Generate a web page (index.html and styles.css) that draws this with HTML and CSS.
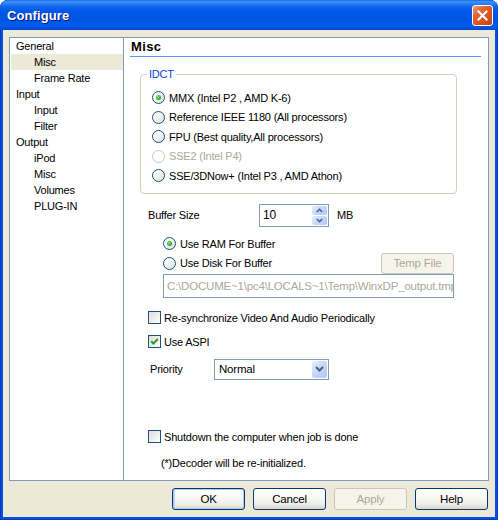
FILE: index.html
```html
<!DOCTYPE html>
<html>
<head>
<meta charset="utf-8">
<link rel="stylesheet" href="styles.css">
</head>
<body>
<div class="window">
  <div class="titlebar">
    <span class="title">Configure</span>
    <span class="close"><svg width="11" height="11" viewBox="0 0 11 11"><path d="M1.5 1.5L9.5 9.5M9.5 1.5L1.5 9.5" stroke="#fff" stroke-width="2.2" stroke-linecap="square"/></svg></span>
  </div>
  <div class="client">
    <div class="panel">
      <ul class="tree">
        <li>General</li>
        <li class="sub sel">Misc</li>
        <li class="sub">Frame Rate</li>
        <li>Input</li>
        <li class="sub">Input</li>
        <li class="sub">Filter</li>
        <li>Output</li>
        <li class="sub">iPod</li>
        <li class="sub">Misc</li>
        <li class="sub">Volumes</li>
        <li class="sub">PLUG-IN</li>
      </ul>
      <div class="content">
        <div class="header">Misc</div>
        <fieldset class="group">
          <legend>IDCT</legend>
          <div class="opts">
            <div class="opt"><span class="radio on"><i></i></span>MMX (Intel P2 , AMD K-6)</div>
            <div class="opt"><span class="radio"></span>Reference IEEE 1180 (All processors)</div>
            <div class="opt"><span class="radio"></span>FPU (Best quality,All processors)</div>
            <div class="opt disabled"><span class="radio"></span>SSE2 (Intel P4)</div>
            <div class="opt"><span class="radio"></span>SSE/3DNow+ (Intel P3 , AMD Athon)</div>
          </div>
        </fieldset>
        <div class="buffer">
          <span class="lbl">Buffer Size</span>
          <div class="spin">
            <span class="val">10</span>
            <div class="spinbtns">
              <span class="sb"><svg width="7" height="5" viewBox="0 0 7 5"><path d="M0.8 4L3.5 1.3L6.2 4" fill="none" stroke="#4D6185" stroke-width="1.6"/></svg></span>
              <span class="sb"><svg width="7" height="5" viewBox="0 0 7 5"><path d="M0.8 1L3.5 3.7L6.2 1" fill="none" stroke="#4D6185" stroke-width="1.6"/></svg></span>
            </div>
          </div>
          <span class="unit">MB</span>
        </div>
        <div class="bufopts">
          <div class="ram"><span class="radio on"><i></i></span>Use RAM For Buffer</div>
          <div class="disk"><span class="radio"></span>Use Disk For Buffer<span class="btn dis temp">Temp File</span></div>
          <div class="path">C:\DOCUME~1\pc4\LOCALS~1\Temp\WinxDP_output.tmp</div>
        </div>
        <div class="chk first"><span class="check"></span>Re-synchronize Video And Audio Periodically</div>
        <div class="chk second"><span class="check"><svg width="11" height="11" viewBox="0 0 11 11"><path d="M2.2 5.2L4.4 7.6L8.8 3" fill="none" stroke="#21A121" stroke-width="2"/></svg></span>Use ASPI</div>
        <div class="priority">
          <span class="plbl">Priority</span>
          <div class="combo">
            <span class="cval">Normal</span>
            <span class="cbtn"><svg width="9" height="6" viewBox="0 0 9 6"><path d="M1 1L4.5 4.5L8 1" fill="none" stroke="#4D6185" stroke-width="2"/></svg></span>
          </div>
        </div>
        <div class="chk shutdown"><span class="check"></span>Shutdown the computer when job is done</div>
        <div class="note">(*)Decoder will be re-initialized.</div>
      </div>
    </div>
    <div class="buttons">
      <span class="btn def">OK</span>
      <span class="btn">Cancel</span>
      <span class="btn dis">Apply</span>
      <span class="btn">Help</span>
    </div>
  </div>
</div>
</body>
</html>
```

FILE: styles.css
```css
body {
  margin: 0;
  font-family: "Liberation Sans", Arial, sans-serif;
  font-size: 11px;
  letter-spacing: -0.2px;
  color: #000;
}

.window {
  width: 498px;
  height: 520px;
  background: #0552E2;
  border-radius: 8px 8px 0 0;
  display: flex;
  flex-direction: column;
  box-shadow: inset 0 0 0 1px #0638C0;
}

.titlebar {
  height: 30px;
  flex: none;
  display: flex;
  align-items: center;
  justify-content: space-between;
  padding: 0 5px 0 7px;
  border-radius: 8px 8px 0 0;
  background: linear-gradient(to bottom,
    #0A52D8 0px, #3D8FF8 1px, #3488F6 3px, #1468EE 6px,
    #0058E8 11px, #0054E4 20px, #015CEC 25px, #0153E0 28px, #0244CC 30px);
}

.title {
  color: #fff;
  font-weight: bold;
  font-size: 13px;
  letter-spacing: 0.1px;
  text-shadow: 1px 1px 0 #0A1874;
  padding-top: 1px;
}

.close {
  width: 21px;
  height: 21px;
  box-sizing: border-box;
  border: 1px solid #fff;
  border-radius: 3px;
  background: linear-gradient(135deg, #F29A7E 0%, #E4602F 35%, #D8501F 70%, #C03E14 100%);
  display: flex;
  align-items: center;
  justify-content: center;
}

.client {
  flex: 1;
  margin: 0 3px 3px;
  background: #ECE9D8;
  padding: 7px 0 0 6px;
  display: flex;
  flex-direction: column;
}

.panel {
  width: 480px;
  height: 444px;
  box-sizing: border-box;
  border: 1px solid #7F9DB9;
  display: flex;
  background: #fff;
}

.tree {
  width: 113px;
  flex: none;
  border-right: 1px solid #7F9DB9;
  margin: 0;
  padding: 0;
  list-style: none;
}

.tree li {
  height: 16px;
  line-height: 16px;
  padding-left: 6px;
  white-space: nowrap;
}

.tree li.sub {
  padding-left: 24px;
}

.tree li.sel {
  background: #ECE9D8;
  margin-left: 1px;
  padding-left: 23px;
}

.content {
  flex: 1;
  padding: 0 7px 0 6px;
  display: flex;
  flex-direction: column;
}

.header {
  height: 18px;
  line-height: 18px;
  border-bottom: 1px solid #5A9BEA;
  font-weight: bold;
  font-size: 13px;
  letter-spacing: 0.4px;
  padding-left: 1px;
}

.group {
  margin: 11px 0 0 10px;
  width: 317px;
  box-sizing: border-box;
  border: 1px solid #D0D0BF;
  border-radius: 4px;
  padding: 7px 0 7px 0;
  min-width: 0;
}

.group legend {
  padding: 0 2px;
  margin-left: 6px;
  color: #0046D5;
  line-height: 13px;
}

.opts {
  padding-left: 11px;
}

.opt {
  height: 19.5px;
  display: flex;
  align-items: center;
  white-space: nowrap;
}

.opt.disabled {
  color: #ACA899;
}

.radio {
  width: 13px;
  height: 13px;
  box-sizing: border-box;
  border: 1px solid #1C5180;
  border-radius: 50%;
  background: linear-gradient(135deg, #FFFFFF 20%, #DCDCD4 100%);
  margin-right: 4px;
  flex: none;
  display: flex;
  align-items: center;
  justify-content: center;
}

.opt.disabled .radio {
  border-color: #CAC8BB;
  background: #fff;
}

.radio i {
  width: 5px;
  height: 5px;
  border-radius: 50%;
  background: radial-gradient(circle at 40% 40%, #8BE584 0%, #2CB02A 60%, #1E8E1E 100%);
}

.buffer {
  margin: 10px 0 0 18px;
  height: 23px;
  display: flex;
  align-items: center;
}

.lbl {
  width: 111px;
}

.spin {
  width: 70px;
  height: 23px;
  box-sizing: border-box;
  border: 1px solid #7F9DB9;
  padding: 1px;
  display: flex;
  align-items: center;
  background: #fff;
}

.spin .val {
  flex: 1;
  padding-left: 2px;
  font-size: 12px;
}

.spinbtns {
  width: 15px;
  height: 100%;
  display: flex;
  flex-direction: column;
  gap: 1px;
}

.sb {
  flex: 1;
  border-radius: 2px;
  background: linear-gradient(135deg, #E6EEFC 0%, #C6D6FA 50%, #B3C7F5 100%);
  display: flex;
  align-items: center;
  justify-content: center;
}

.unit {
  margin-left: 8px;
}

.bufopts {
  margin-left: 33px;
  width: 291px;
  display: flex;
  flex-direction: column;
}

.ram {
  margin-top: 8px;
  height: 18px;
  display: flex;
  align-items: center;
}

.disk {
  height: 21px;
  display: flex;
  align-items: center;
}

.btn {
  width: 73px;
  height: 22px;
  box-sizing: border-box;
  border: 1px solid #003C74;
  border-radius: 3px;
  background: linear-gradient(#FFFFFF 0%, #F6F6F2 50%, #ECEBE4 80%, #D8D3C6 100%);
  display: flex;
  align-items: center;
  justify-content: center;
  flex: none;
  font-size: 11.5px;
}

.btn.dis {
  border-color: #C9C7BA;
  background: #F5F4EA;
  color: #ACA899;
}

.btn.def {
  box-shadow: inset 0 0 0 1px #B0C8EE, inset 1px 0 0 1px #C4D8F6;
}

.temp {
  margin-left: auto;
  height: 21px;
}

.path {
  height: 24px;
  box-sizing: border-box;
  border: 1px solid #7F9DB9;
  padding-left: 3px;
  display: flex;
  align-items: center;
  white-space: nowrap;
  overflow: hidden;
  color: #ACA899;
  font-size: 11.5px;
}

.chk {
  margin-left: 18px;
  height: 16px;
  display: flex;
  align-items: center;
  white-space: nowrap;
}

.chk.first {
  margin-top: 12px;
}

.chk.second {
  margin-top: 8px;
}

.chk.shutdown {
  margin-top: 49px;
}

.check {
  width: 13px;
  height: 13px;
  box-sizing: border-box;
  border: 1px solid #1C5180;
  background: linear-gradient(135deg, #DCDCD7 0%, #FFFFFF 100%);
  margin-right: 3px;
  flex: none;
  display: flex;
  align-items: center;
  justify-content: center;
}

.priority {
  margin: 9px 0 0 20px;
  height: 21px;
  display: flex;
  align-items: center;
}

.plbl {
  width: 64px;
}

.combo {
  width: 115px;
  height: 21px;
  box-sizing: border-box;
  border: 1px solid #7F9DB9;
  padding: 1px;
  display: flex;
  align-items: center;
}

.cval {
  flex: 1;
  padding-left: 3px;
  font-size: 11.5px;
}

.cbtn {
  width: 15px;
  height: 100%;
  border-radius: 2px;
  background: linear-gradient(135deg, #E6EEFC 0%, #C6D6FA 50%, #B3C7F5 100%);
  display: flex;
  align-items: center;
  justify-content: center;
}

.note {
  margin: 12px 0 0 31px;
  height: 13px;
  line-height: 13px;
}

.buttons {
  margin-top: 7px;
  padding-right: 7px;
  display: flex;
  justify-content: flex-end;
  gap: 8px;
}
```
